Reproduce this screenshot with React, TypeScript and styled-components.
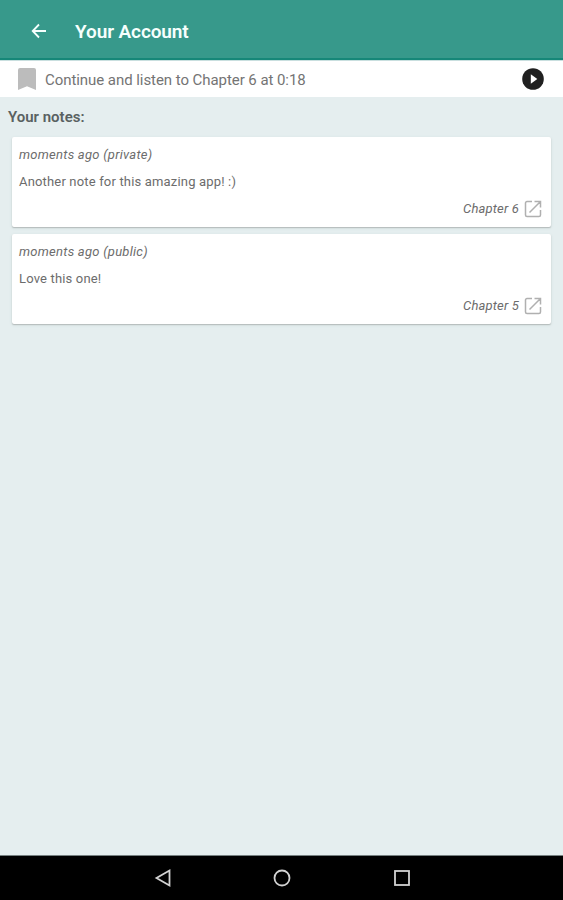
import React from "react";
import styled, { createGlobalStyle } from "styled-components";

const GlobalStyle = createGlobalStyle`
  * { box-sizing: border-box; }
  body { margin: 0; background: #e5eeef; }
`;

const Screen = styled.div`
  display: flex;
  flex-direction: column;
  height: 900px;
  background: #e5eeef;
  color: #6c6c6c;
  font-family: Roboto, "Liberation Sans", sans-serif;
`;

const Header = styled.header`
  display: flex;
  align-items: center;
  flex: none;
  height: 60px;
  padding: 3px 0 0 30px;
  gap: 27px;
  background: #37998b;
  border-bottom: 2px solid #168778;
`;

const Title = styled.h1`
  margin: 0;
  padding-top: 2px;
  color: #f6fffd;
  font-size: 19px;
  font-weight: 600;
  line-height: 24px;
  letter-spacing: -0.1px;
`;

const ContinueRow = styled.div`
  display: flex;
  align-items: center;
  flex: none;
  height: 37px;
  padding: 0 18px;
  background: #fff;
  border-top: 1px solid #c9dfdf;
`;

const ContinueText = styled.span`
  flex: 1;
  margin-left: 9px;
  padding-top: 1px;
  color: #747474;
  font-size: 15px;
  line-height: 20px;
  letter-spacing: -0.06px;
`;

const Notes = styled.main`
  flex: 1;
  padding: 10px 12px 0;
`;

const NotesHeading = styled.h2`
  margin: 0 0 10px -4px;
  color: #596161;
  font-size: 15px;
  font-weight: 600;
  line-height: 20px;
`;

const Card = styled.article`
  height: 90px;
  margin-bottom: 7px;
  padding: 8px 9px 0 7px;
  background: #fff;
  border-radius: 2px;
  box-shadow: 0 1px 1px #b6bdbd, 0 1px 3px #cbd6d6;
`;

const Line = styled.p<{ $italic?: boolean }>`
  margin: 0 0 7px;
  font-size: 13px;
  font-style: ${(p) => (p.$italic ? "italic" : "normal")};
  line-height: 20px;
  letter-spacing: ${(p) => (p.$italic ? "0.26px" : "0.17px")};
`;

const ChapterLink = styled.div`
  display: flex;
  align-items: center;
  justify-content: flex-end;
  gap: 5px;
  height: 20px;
  font-size: 13px;
  font-style: italic;
  line-height: 20px;
  letter-spacing: 0.17px;
`;

const NavBar = styled.nav`
  display: flex;
  align-items: center;
  justify-content: center;
  flex: none;
  gap: 100px;
  height: 45px;
  background: #000;
  border-top: 1px solid #768080;
`;

const Icon = styled.svg`
  display: block;
  flex: none;
`;

const BackArrow = () => (
  <Icon width="18" height="18" viewBox="0 0 18 18" fill="none" stroke="#f6fffd" strokeWidth="1.8">
    <path d="M16 9H3M9 2.5L2.7 9L9 15.5" />
  </Icon>
);

const Bookmark = () => (
  <Icon width="18" height="22" viewBox="0 0 18 22">
    <path d="M2 0h14a2 2 0 0 1 2 2v20l-9-3.7L0 22V2a2 2 0 0 1 2-2z" fill="#bcbcbc" />
  </Icon>
);

const Play = () => (
  <Icon width="24" height="24" viewBox="0 0 24 24">
    <circle cx="12" cy="12" r="10.8" fill="#202020" />
    <path d="M9.8 7.3v9.4l6.5-4.7z" fill="#fff" />
  </Icon>
);

const OpenNote = () => (
  <Icon width="18" height="18" viewBox="0 0 18 18" fill="none" stroke="#b0b0b0" strokeWidth="1.5">
    <path d="M8 1.5H3A1.5 1.5 0 0 0 1.5 3v12A1.5 1.5 0 0 0 3 16.5h12a1.5 1.5 0 0 0 1.5-1.5v-5M5.5 12.5L16 2M10.5 1.5h6v6" />
  </Icon>
);

const notes = [
  { when: "moments ago (private)", text: "Another note for this amazing app! :)", chapter: "Chapter 6" },
  { when: "moments ago (public)", text: "Love this one!", chapter: "Chapter 5" },
];

export default function App() {
  return (
    <>
      <GlobalStyle />
      <Screen>
        <Header>
          <BackArrow />
          <Title>Your Account</Title>
        </Header>
        <ContinueRow>
          <Bookmark />
          <ContinueText>Continue and listen to Chapter 6 at 0:18</ContinueText>
          <Play />
        </ContinueRow>
        <Notes>
          <NotesHeading>Your notes:</NotesHeading>
          {notes.map((note) => (
            <Card key={note.chapter}>
              <Line $italic>{note.when}</Line>
              <Line>{note.text}</Line>
              <ChapterLink>
                {note.chapter}
                <OpenNote />
              </ChapterLink>
            </Card>
          ))}
        </Notes>
        <NavBar>
          <Icon width="20" height="20" viewBox="0 0 20 20" fill="none" stroke="#d2d2d2" strokeWidth="1.8">
            <path d="M17.5 2.5v15L4.5 10z" />
          </Icon>
          <Icon width="20" height="20" viewBox="0 0 20 20" fill="none" stroke="#d2d2d2" strokeWidth="1.8">
            <circle cx="10" cy="10" r="7.5" />
          </Icon>
          <Icon width="20" height="20" viewBox="0 0 20 20" fill="none" stroke="#d2d2d2" strokeWidth="1.8">
            <rect x="3" y="3" width="14" height="14" />
          </Icon>
        </NavBar>
      </Screen>
    </>
  );
}
